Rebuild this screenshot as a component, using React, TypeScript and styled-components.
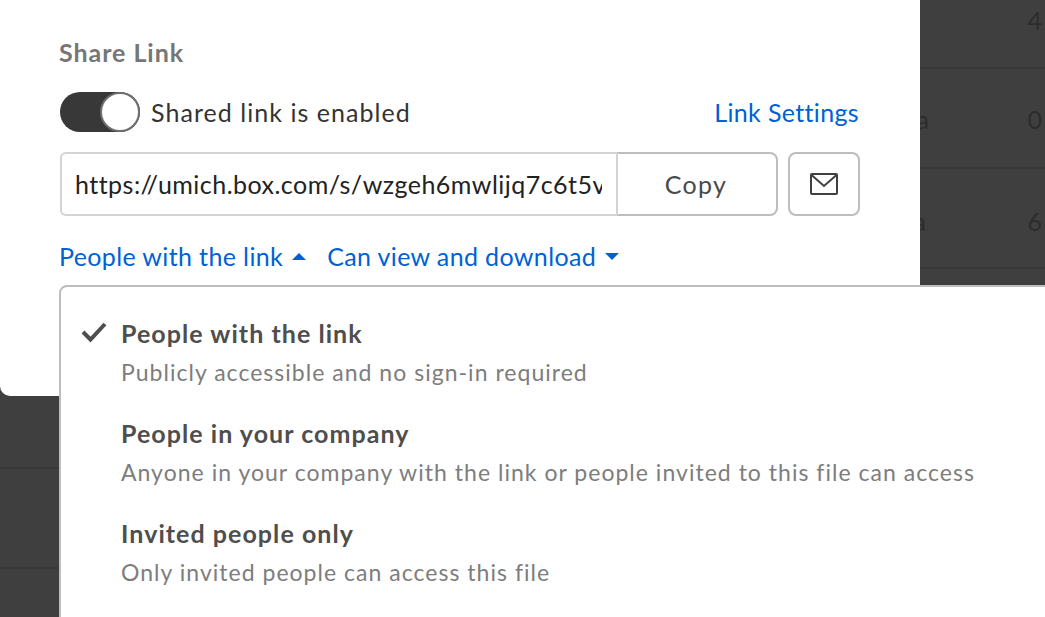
import React from "react";
import styled, { createGlobalStyle } from "styled-components";

const Global = createGlobalStyle`
  html, body { margin: 0; padding: 0; height: 100%; overflow: hidden; background: #3f3f3f; }
  body { font-family: Lato, "Open Sans", sans-serif; }
`;

const Page = styled.div`
  position: relative;
  width: 1045px;
  height: 617px;
  overflow: hidden;
  background: #3f3f3f;
`;

const Table = styled.div`
  display: flex;
  flex-direction: column;
  color: #2c2c2c;
  font-size: 25px;
`;

const Row = styled.div<{ $height: number; $top?: number; $bottom?: number }>`
  height: ${(p) => p.$height}px;
  box-sizing: border-box;
  border-bottom: 2px solid #383838;
  display: flex;
  align-items: center;
  justify-content: space-between;
  padding: ${(p) => p.$top ?? 0}px 3px ${(p) => p.$bottom ?? 0}px 0;
  flex: none;
`;

const NameCell = styled.span<{ $end: number }>`
  width: ${(p) => p.$end}px;
  text-align: right;
`;

const Modal = styled.section`
  position: absolute;
  left: 0;
  top: 0;
  width: 920px;
  height: 396px;
  box-sizing: border-box;
  background: #fff;
  border-bottom-left-radius: 10px;
  padding: 36px 60px 0;
`;

const Title = styled.h2`
  margin: 0 0 0 -1px;
  font-size: 25px;
  line-height: 32px;
  font-weight: 700;
  letter-spacing: 0.95px;
  color: #767676;
`;

const ToggleRow = styled.div`
  display: flex;
  align-items: center;
  justify-content: space-between;
  width: 799px;
  height: 40px;
  margin-top: 24px;
`;

const ToggleLabel = styled.label`
  display: flex;
  align-items: center;
  gap: 11px;
  font-size: 25px;
  letter-spacing: 1.05px;
  color: #333;
`;

const Toggle = styled.span`
  position: relative;
  display: block;
  width: 80px;
  height: 40px;
  border-radius: 20px;
  background: #383838;
`;

const Knob = styled.span`
  position: absolute;
  right: 0;
  top: 0;
  width: 40px;
  height: 40px;
  box-sizing: border-box;
  border-radius: 50%;
  background: #fff;
  border: 2px solid #6f6f6f;
`;

const LinkText = styled.a`
  color: #0061d5;
  font-size: 25px;
  letter-spacing: 0.35px;
  text-decoration: none;
  white-space: nowrap;
`;

const UrlRow = styled.div`
  display: flex;
  align-items: stretch;
  height: 64px;
  margin-top: 20px;
`;

const UrlInput = styled.div`
  width: 556px;
  box-sizing: border-box;
  border: 2px solid #d3d3d3;
  border-right: none;
  border-radius: 6px 0 0 6px;
  padding: 0 14px 0 13px;
  display: flex;
  align-items: center;
  font-size: 25px;
  letter-spacing: 0.47px;
  color: #222;
  overflow: hidden;
  white-space: nowrap;
`;

const UrlClip = styled.span`
  display: block;
  overflow: hidden;
  width: 100%;
`;

const CopyButton = styled.button`
  width: 162px;
  box-sizing: border-box;
  background: #fff;
  border: 2px solid #bdbdbd;
  border-left-color: #d3d3d3;
  border-radius: 0 8px 8px 0;
  font: 25px Lato, sans-serif;
  letter-spacing: 1.3px;
  color: #4a4a4a;
  padding: 0 2px 0 0;
`;

const MailButton = styled.button`
  width: 72px;
  margin-left: 10px;
  box-sizing: border-box;
  background: #fff;
  border: 2px solid #bdbdbd;
  border-radius: 8px;
  padding: 0;
  display: flex;
  align-items: center;
  justify-content: center;
`;

const Menus = styled.div`
  display: flex;
  align-items: center;
  gap: 21px;
  margin: 22px 0 0 -1px;
  height: 36px;
`;

const MenuLink = styled.span`
  display: flex;
  align-items: center;
  gap: 9px;
  color: #0061d5;
  font-size: 25px;
  letter-spacing: 0.37px;
  white-space: nowrap;
`;

const Caret = styled.span<{ $up?: boolean }>`
  width: 0;
  height: 0;
  border-left: 7px solid transparent;
  border-right: 7px solid transparent;
  ${(p) => (p.$up ? "border-bottom: 7px solid #0061d5;" : "border-top: 7px solid #0061d5;")}
`;

const Dropdown = styled.div`
  position: absolute;
  left: 59px;
  top: 285px;
  width: 1040px;
  height: 400px;
  box-sizing: border-box;
  background: #fff;
  border: 2px solid #bdbdbd;
  border-radius: 8px;
  padding: 24px 0 0 60px;
  display: flex;
  flex-direction: column;
`;

const Option = styled.div`
  position: relative;
  height: 100px;
  flex: none;
`;

const Check = styled.svg`
  position: absolute;
  left: -40px;
  top: 10px;
`;

const OptionTitle = styled.div`
  font-size: 25px;
  line-height: 44px;
  font-weight: 700;
  letter-spacing: 1.05px;
  color: #4e4e4e;
`;

const OptionDesc = styled.div`
  font-size: 23px;
  line-height: 34px;
  letter-spacing: 1.02px;
  color: #7d7d7d;
  white-space: nowrap;
`;

const options = [
  { title: "People with the link", desc: "Publicly accessible and no sign-in required", checked: true },
  { title: "People in your company", desc: "Anyone in your company with the link or people invited to this file can access", checked: false },
  { title: "Invited people only", desc: "Only invited people can access this file", checked: false },
];

export default function App() {
  return (
    <Page>
      <Global />
      <Table>
        <Row $height={69} $bottom={28}><span />
          <span>4</span></Row>
        <Row $height={100} $top={2}><NameCell $end={929}>a</NameCell><span>0</span></Row>
        <Row $height={100} $top={6}><NameCell $end={926}>a</NameCell><span>6</span></Row>
        <Row $height={100} />
        <Row $height={100} />
        <Row $height={100} />
      </Table>
      <Modal>
        <Title>Share Link</Title>
        <ToggleRow>
          <ToggleLabel>
            <Toggle><Knob /></Toggle>
            Shared link is enabled
          </ToggleLabel>
          <LinkText>Link Settings</LinkText>
        </ToggleRow>
        <UrlRow>
          <UrlInput><UrlClip>https://umich.box.com/s/wzgeh6mwlijq7c6t5v</UrlClip></UrlInput>
          <CopyButton>Copy</CopyButton>
          <MailButton>
            <svg width="28" height="22" viewBox="0 0 28 22" fill="none" stroke="#404040" strokeWidth="2">
              <rect x="1" y="1" width="26" height="20" rx="1" />
              <path d="M1.5 2 L14 13 L26.5 2" />
            </svg>
          </MailButton>
        </UrlRow>
        <Menus>
          <MenuLink>People with the link <Caret $up /></MenuLink>
          <MenuLink>Can view and download <Caret /></MenuLink>
        </Menus>
      </Modal>
      <Dropdown>
        {options.map((o) => (
          <Option key={o.title}>
            {o.checked && (
              <Check width="26" height="22" viewBox="0 0 26 22" fill="none" stroke="#4e4e4e" strokeWidth="4">
                <path d="M2 11 L9.5 18.5 L24 3" />
              </Check>
            )}
            <OptionTitle>{o.title}</OptionTitle>
            <OptionDesc>{o.desc}</OptionDesc>
          </Option>
        ))}
      </Dropdown>
    </Page>
  );
}
